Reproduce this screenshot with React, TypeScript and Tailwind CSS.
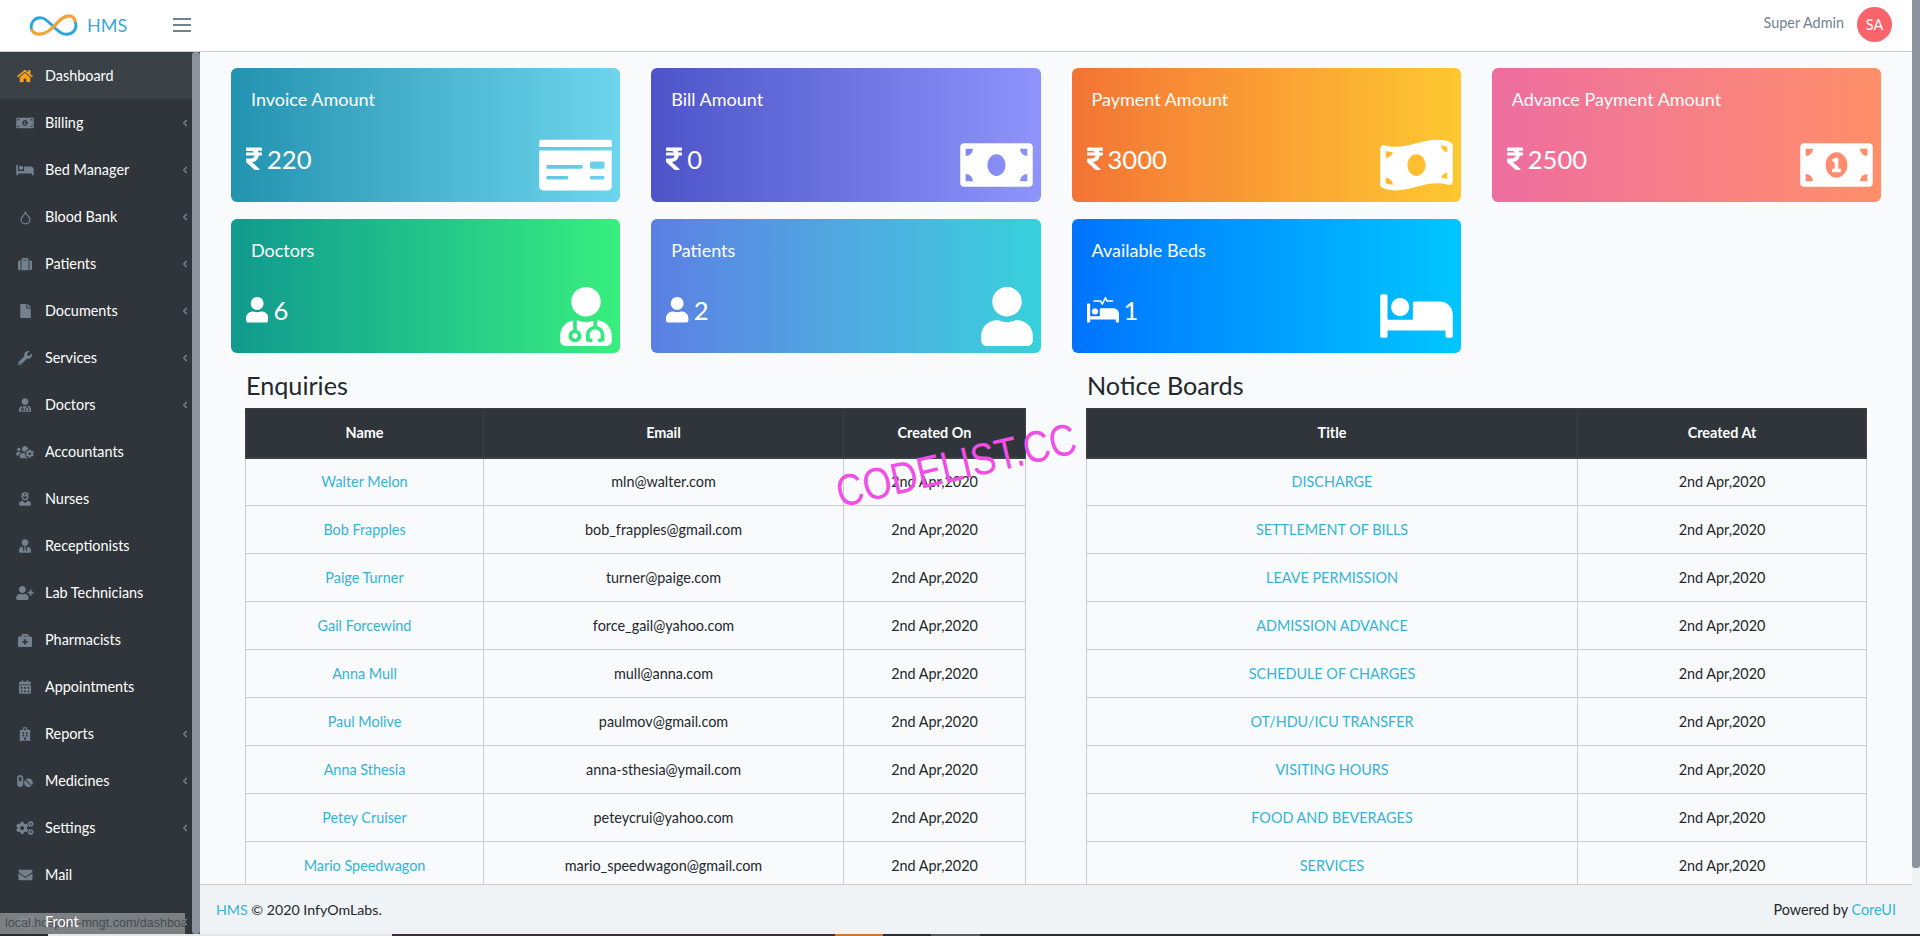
import React from "react";
import type { IconType } from "react-icons";
import {
  FaBed,
  FaBriefcaseMedical,
  FaCalendarAlt,
  FaCogs,
  FaEnvelope,
  FaFile,
  FaHome,
  FaHospital,
  FaMoneyBill,
  FaMoneyBillAlt,
  FaMoneyBillWave,
  FaMoneyCheck,
  FaPills,
  FaProcedures,
  FaRupeeSign,
  FaSuitcase,
  FaUser,
  FaUserMd,
  FaUserNurse,
  FaUserPlus,
  FaUserTie,
  FaUsersCog,
  FaWrench,
} from "react-icons/fa";
import { ChevronLeft, Droplet } from "lucide-react";

const menu: { label: string; icon: any; w: string; more?: boolean; active?: boolean }[] = [
  { label: "Dashboard", icon: FaHome, w: "h-[14px] w-[16px]", active: true },
  { label: "Billing", icon: FaMoneyBillAlt, w: "h-[14px] w-[18px]", more: true },
  { label: "Bed Manager", icon: FaBed, w: "h-[14px] w-[18px]", more: true },
  { label: "Blood Bank", icon: Droplet, w: "h-[15px] w-[15px]", more: true },
  { label: "Patients", icon: FaSuitcase, w: "h-[14px] w-[14px]", more: true },
  { label: "Documents", icon: FaFile, w: "h-[14px] w-[11px]", more: true },
  { label: "Services", icon: FaWrench, w: "h-[14px] w-[14px]", more: true },
  { label: "Doctors", icon: FaUserMd, w: "h-[14px] w-[12px]", more: true },
  { label: "Accountants", icon: FaUsersCog, w: "h-[14px] w-[18px]" },
  { label: "Nurses", icon: FaUserNurse, w: "h-[14px] w-[12px]" },
  { label: "Receptionists", icon: FaUserTie, w: "h-[14px] w-[12px]" },
  { label: "Lab Technicians", icon: FaUserPlus, w: "h-[14px] w-[18px]" },
  { label: "Pharmacists", icon: FaBriefcaseMedical, w: "h-[14px] w-[14px]" },
  { label: "Appointments", icon: FaCalendarAlt, w: "h-[14px] w-[12px]" },
  { label: "Reports", icon: FaHospital, w: "h-[14px] w-[12px]", more: true },
  { label: "Medicines", icon: FaPills, w: "h-[14px] w-[16px]", more: true },
  { label: "Settings", icon: FaCogs, w: "h-[14px] w-[18px]", more: true },
  { label: "Mail", icon: FaEnvelope, w: "h-[14px] w-[15px]" },
  { label: "Front", icon: FaCogs, w: "h-[14px] w-[18px]", more: true },
];

const cards: {
  title: string;
  value: string;
  small: IconType;
  smallClass: string;
  big: IconType;
  bigClass: string;
  bg: string;
}[] = [
  { title: "Invoice Amount", value: "220", small: FaRupeeSign, smallClass: "w-[16px]", big: FaMoneyCheck, bg: "from-[#2193b0] to-[#6dd5ed]", bigClass: "w-[73px] h-[58px]" },
  { title: "Bill Amount", value: "0", small: FaRupeeSign, smallClass: "w-[16px]", big: FaMoneyBill, bg: "from-[#4e54c8] to-[#8f94fb]", bigClass: "w-[73px] h-[58px]" },
  { title: "Payment Amount", value: "3000", small: FaRupeeSign, smallClass: "w-[16px]", big: FaMoneyBillWave, bg: "from-[#f37335] to-[#fdc830]", bigClass: "w-[73px] h-[58px]" },
  { title: "Advance Payment Amount", value: "2500", small: FaRupeeSign, smallClass: "w-[16px]", big: FaMoneyBillAlt, bg: "from-[#ee6d9f] to-[#ff8f68]", bigClass: "w-[73px] h-[58px]" },
  { title: "Doctors", value: "6", small: FaUser, smallClass: "w-[22.4px]", big: FaUserMd, bg: "from-[#11998e] to-[#38ef7d]", bigClass: "w-[52px] h-[59px] -mb-[1px]" },
  { title: "Patients", value: "2", small: FaUser, smallClass: "w-[22.4px]", big: FaUser, bg: "from-[#5b7fe3] to-[#36d1dc]", bigClass: "w-[52px] h-[59px] -mb-[1px]" },
  { title: "Available Beds", value: "1", small: FaProcedures, smallClass: "w-[32px]", big: FaBed, bg: "from-[#0072ff] to-[#00c6ff]", bigClass: "w-[73px] h-[58px]" },
];

const enquiries = [
  ["Walter Melon", "mln@walter.com"],
  ["Bob Frapples", "bob_frapples@gmail.com"],
  ["Paige Turner", "turner@paige.com"],
  ["Gail Forcewind", "force_gail@yahoo.com"],
  ["Anna Mull", "mull@anna.com"],
  ["Paul Molive", "paulmov@gmail.com"],
  ["Anna Sthesia", "anna-sthesia@ymail.com"],
  ["Petey Cruiser", "peteycrui@yahoo.com"],
  ["Mario Speedwagon", "mario_speedwagon@gmail.com"],
];

const notices = [
  "DISCHARGE",
  "SETTLEMENT OF BILLS",
  "LEAVE PERMISSION",
  "ADMISSION ADVANCE",
  "SCHEDULE OF CHARGES",
  "OT/HDU/ICU TRANSFER",
  "VISITING HOURS",
  "FOOD AND BEVERAGES",
  "SERVICES",
];

const thClass = "border border-[#3a4248] border-b-2 h-[49px] p-0 text-center text-[14.4px] font-bold text-white";
const tdClass = "border border-[#c8ced3] h-[48px] p-0 text-center text-[14.4px] text-[#23282c]";
const linkClass = "border border-[#c8ced3] h-[48px] p-0 text-center text-[14.4px] text-[#35b4d6]";

function Logo() {
  return (
    <svg viewBox="0 0 52 24" className="h-[23px] w-[50px]" fill="none" strokeLinecap="round">
      <path d="M3 17C0 10 6 3 13 4c8 1 15 16 24 17 9 1 14-6 11-13" stroke="#2ba6d9" strokeWidth="3" />
      <path d="M3 17c3 5 11 5 17 1C29 12 32 3 41 2c3 0 6 2 7 5" stroke="#f0a53c" strokeWidth="3.4" />
    </svg>
  );
}

function Sidebar() {
  return (
    <div className="flex w-[200px] shrink-0 bg-[#2f353a]">
      <ul className="w-[192px] shrink-0">
        {menu.map((item) => {
          const Icon = item.icon;
          return (
            <li
              key={item.label}
              className={`flex h-[47px] items-center pr-[2px] pt-[1px] text-white ${item.active ? "bg-[#3a4248]" : ""}`}
            >
              <span className="flex w-[45px] shrink-0 justify-center pl-[5px]">
                <Icon className={`${item.w} ${item.active ? "text-[#f8a01c]" : "text-[#73818f]"}`} />
              </span>
              <span className={`flex-1 text-[14.4px] ${item.label === "Front" ? "relative z-10" : ""}`}>{item.label}</span>
              {item.more && <ChevronLeft size={10} strokeWidth={4} className="text-[#73818f]" />}
            </li>
          );
        })}
      </ul>
      <div className="w-[8px] rounded-[3px] bg-[#8b949c]" />
    </div>
  );
}

function Card({ card }: { card: (typeof cards)[number] }) {
  const Small = card.small;
  const Big = card.big;
  return (
    <div className={`flex h-[134px] flex-col rounded-[6px] bg-gradient-to-r pb-[8px] pl-[15px] pr-[8px] pt-[18px] text-white ${card.bg}`}>
      <div className="ml-[5px] text-[18px] leading-[27px]">{card.title}</div>
      <div className="flex flex-1 items-end justify-between">
        <div className="mb-[20px] flex items-center gap-[5px] text-[25.6px] leading-[30px]">
          <Small className={`h-[25.6px] ${card.smallClass}`} />
          <span>{card.value}</span>
        </div>
        <Big className={card.bigClass} />
      </div>
    </div>
  );
}

function App() {
  return (
    <div className="relative flex h-[936px] w-[1920px] flex-col overflow-hidden bg-[#f9fafc] font-[Lato,sans-serif]">
      <div className="flex min-h-0 flex-1">
        <div className="flex min-w-0 flex-1 flex-col">
          <header className="flex h-[52px] shrink-0 items-center border-b border-[#c8ced3] bg-white pr-[20px]">
            <div className="mb-[1px] ml-[29px] flex items-center gap-[8px]">
              <Logo />
              <span className="text-[18px] text-[#3ba8d6]">HMS</span>
            </div>
            <div className="mb-[1px] ml-[46px] flex w-[18px] flex-col gap-[4px]">
              <span className="h-[2px] bg-[#73818f]" />
              <span className="h-[2px] bg-[#73818f]" />
              <span className="h-[2px] bg-[#73818f]" />
            </div>
            <div className="mb-[2px] ml-auto flex items-center gap-[13px]">
              <span className="mb-[3px] text-[14.4px] text-[#73818f]">Super Admin</span>
              <span className="flex h-[35px] w-[35px] items-center justify-center rounded-full bg-[#f9636b] text-[14.4px] text-white">SA</span>
            </div>
          </header>
          <div className="flex min-h-0 flex-1">
            <Sidebar />
            <div className="flex min-w-0 flex-1 flex-col">
              <main className="min-h-0 flex-1 overflow-hidden pt-[16px]">
                <div className="grid grid-cols-4 gap-x-[31px] gap-y-[17px] pl-[31px] pr-[31px]">
                  {cards.map((c) => (
                    <Card key={c.title} card={c} />
                  ))}
                </div>
                <div className="mt-[18px] grid grid-cols-2 gap-x-[60px] pl-[45px] pr-[45px]">
                  <section>
                    <h2 className="mb-[8px] ml-[1px] h-[29px] text-[25.2px] leading-[29px] text-[#23282c]">Enquiries</h2>
                    <table className="w-full table-fixed border-collapse">
                      <thead className="bg-[#2f353a]">
                        <tr>
                          <th className={`${thClass} w-[238px]`}>Name</th>
                          <th className={`${thClass} w-[360px]`}>Email</th>
                          <th className={thClass}>Created On</th>
                        </tr>
                      </thead>
                      <tbody>
                        {enquiries.map((row) => (
                          <tr key={row[0]}>
                            <td className={linkClass}>{row[0]}</td>
                            <td className={tdClass}>{row[1]}</td>
                            <td className={tdClass}>2nd Apr,2020</td>
                          </tr>
                        ))}
                      </tbody>
                    </table>
                  </section>
                  <section>
                    <h2 className="mb-[8px] ml-[1px] h-[29px] text-[25.2px] leading-[29px] text-[#23282c]">Notice Boards</h2>
                    <table className="w-full table-fixed border-collapse">
                      <thead className="bg-[#2f353a]">
                        <tr>
                          <th className={`${thClass} w-[491px]`}>Title</th>
                          <th className={thClass}>Created At</th>
                        </tr>
                      </thead>
                      <tbody>
                        {notices.map((title) => (
                          <tr key={title}>
                            <td className={linkClass}>{title}</td>
                            <td className={tdClass}>2nd Apr,2020</td>
                          </tr>
                        ))}
                      </tbody>
                    </table>
                  </section>
                </div>
              </main>
              <footer className="flex h-[50px] shrink-0 items-center justify-between border-t border-[#c8ced3] bg-[#f0f3f5] px-[16px] text-[14.4px] text-[#23282c]">
                <div className="text-[14.2px]">
                  <span className="text-[#35b4d6]">HMS</span> © 2020 InfyOmLabs.
                </div>
                <div>
                  Powered by <span className="text-[#35b4d6]">CoreUI</span>
                </div>
              </footer>
            </div>
          </div>
        </div>
        <div className="w-[8px] shrink-0 bg-[#f0f3f5]">
          <div className="h-[868px] rounded-b-[3px] bg-[#8b949c]" />
        </div>
      </div>
      <div className="flex h-[2px] shrink-0 bg-[#2a2d33]">
        <div className="w-[48px]" />
        <div className="w-[344px] bg-[#e6e6e6]" />
        <div className="w-[443px] bg-[#3a2f3f]" />
        <div className="w-[48px] bg-[#c9783a]" />
        <div className="ml-[48px] w-[49px] bg-[#55585c]" />
      </div>

      {/* browser status bubble, the Front label sits above it */}
      <div className="absolute bottom-[2px] left-0 h-[21px] w-[185px] overflow-hidden whitespace-nowrap bg-[#8a8d90]/85 pl-[5px] font-['Liberation_Sans',sans-serif] text-[12.5px] leading-[21px] text-[#474c51]">
        local.hospital-mngt.com/dashboard
      </div>

      {/* site watermark */}
      <div className="absolute left-[834px] top-[446px] z-20 -rotate-[13deg] scale-y-[1.2] font-['Liberation_Sans',sans-serif] text-[37px] leading-[40px] text-[#f04ee6]">
        CODELIST.CC
      </div>
    </div>
  );
}

export default App;
